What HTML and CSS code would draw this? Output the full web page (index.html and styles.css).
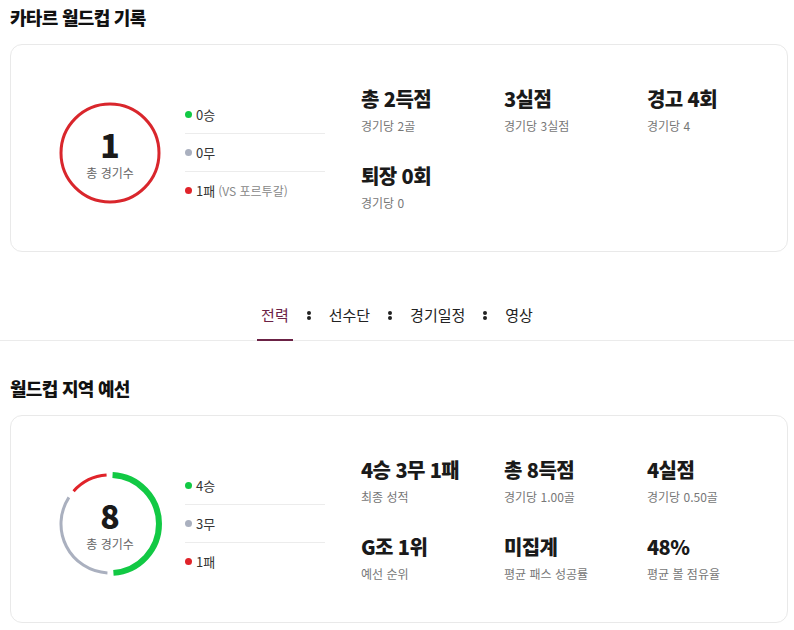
FILE: index.html
```html
<!DOCTYPE html>
<html lang="ko">
<head>
    <meta charset="UTF-8">
    <meta name="viewport" content="width=device-width, initial-scale=1.0">
    <title>카타르 월드컵 기록</title>
    <link rel="stylesheet" href="styles.css">
</head>
<body>
    <h2 class="section-title">카타르 월드컵 기록</h2>
    <div class="record-card">
        <div class="summary">
            <svg class="ring" width="106" height="106" viewBox="0 0 106 106">
                <circle cx="53" cy="53" r="49" fill="none" stroke="#d9262c" stroke-width="3"/>
            </svg>
            <strong class="summary-num">1</strong>
            <span class="summary-label">총 경기수</span>
        </div>
        <ul class="legend">
            <li><span class="dot win"></span>0승</li>
            <li><span class="dot draw"></span>0무</li>
            <li><span class="dot lose"></span>1패 <small>(VS 포르투갈)</small></li>
        </ul>
        <div class="stats">
            <div class="stat"><strong>총 2득점</strong><span>경기당 2골</span></div>
            <div class="stat"><strong>3실점</strong><span>경기당 3실점</span></div>
            <div class="stat"><strong>경고 4회</strong><span>경기당 4</span></div>
            <div class="stat"><strong>퇴장 0회</strong><span>경기당 0</span></div>
        </div>
    </div>

    <nav class="tabs">
        <a class="tab active">전력</a>
        <span class="sep"></span>
        <a class="tab">선수단</a>
        <span class="sep"></span>
        <a class="tab">경기일정</a>
        <span class="sep"></span>
        <a class="tab">영상</a>
    </nav>

    <h2 class="section-title second">월드컵 지역 예선</h2>
    <div class="record-card">
        <div class="summary">
            <svg class="ring" width="106" height="106" viewBox="0 0 106 106">
                <path d="M55.56 4.07 A49 49 0 0 1 56.42 101.88" fill="none" stroke="#12c944" stroke-width="6"/>
                <path d="M50.44 101.93 A49 49 0 0 1 11.9 26.31" fill="none" stroke="#aab0bf" stroke-width="3"/>
                <path d="M16.59 20.21 A49 49 0 0 1 49.58 4.12" fill="none" stroke="#e0232a" stroke-width="3"/>
            </svg>
            <strong class="summary-num">8</strong>
            <span class="summary-label">총 경기수</span>
        </div>
        <ul class="legend">
            <li><span class="dot win"></span>4승</li>
            <li><span class="dot draw"></span>3무</li>
            <li><span class="dot lose"></span>1패</li>
        </ul>
        <div class="stats">
            <div class="stat"><strong>4승 3무 1패</strong><span>최종 성적</span></div>
            <div class="stat"><strong>총 8득점</strong><span>경기당 1.00골</span></div>
            <div class="stat"><strong>4실점</strong><span>경기당 0.50골</span></div>
            <div class="stat"><strong>G조 1위</strong><span>예선 순위</span></div>
            <div class="stat"><strong>미집계</strong><span>평균 패스 성공률</span></div>
            <div class="stat"><strong>48%</strong><span>평균 볼 점유율</span></div>
        </div>
    </div>
</body>
</html>
```

FILE: styles.css
```css
body {
    margin: 0;
    font-family: "Noto Sans CJK KR", "Noto Sans", sans-serif;
    color: #222;
    background: #fff;
}

.section-title {
    font-size: 18px;
    line-height: 24px;
    font-weight: 900;
    letter-spacing: -0.7px;
    margin: 5px 10px 15px;
    color: #111;
}

.section-title.second {
    margin-top: 35px;
}

.record-card {
    display: flex;
    align-items: center;
    margin: 0 6px 0 10px;
    padding: 41px 0 40px 46px;
    border: 1px solid #e9e9e9;
    border-radius: 12px;
}

.summary {
    position: relative;
    width: 106px;
    height: 106px;
    margin-top: 8px;
    display: flex;
    flex-direction: column;
    align-items: center;
    justify-content: center;
    flex-shrink: 0;
}

.ring {
    position: absolute;
    top: 0;
    left: 0;
}

.summary-num {
    font-size: 32px;
    line-height: 30px;
    font-weight: 900;
    color: #1a1a1a;
    margin-top: 4px;
}

.summary-label {
    font-size: 12px;
    line-height: 16px;
    margin-top: 6px;
    color: #666;
}

.legend {
    list-style: none;
    margin: 8px 0 0 22px;
    padding: 0;
    width: 140px;
    flex-shrink: 0;
}

.legend li {
    display: flex;
    align-items: center;
    font-size: 13px;
    line-height: 19px;
    padding: 9px 0;
    color: #333;
    border-bottom: 1px solid #ececec;
}

.legend li:last-child {
    border-bottom: none;
}

.legend small {
    font-size: 12px;
    color: #888;
    margin-left: 3px;
}

.dot {
    width: 7px;
    height: 7px;
    border-radius: 50%;
    margin-right: 4px;
}

.dot.win { background: #12c944; }
.dot.draw { background: #aab0bf; }
.dot.lose { background: #e0232a; }

.stats {
    display: grid;
    grid-template-columns: repeat(3, 143px);
    row-gap: 29px;
    margin-left: 36px;
}

.stat strong {
    display: block;
    font-size: 20px;
    line-height: 26px;
    font-weight: 900;
    letter-spacing: -0.6px;
    color: #1a1a1a;
}

.stat span {
    display: block;
    margin-top: 6px;
    font-size: 12px;
    line-height: 16px;
    color: #777;
}

.tabs {
    display: flex;
    justify-content: center;
    align-items: center;
    gap: 14px;
    margin-top: 43px;
    border-bottom: 1px solid #ebebeb;
}

.tab {
    font-size: 15px;
    line-height: 20px;
    padding: 10px 4px 14px;
    margin-bottom: -1px;
    color: #222;
    border-bottom: 2px solid transparent;
}

.tab.active {
    color: #6b2245;
    border-bottom-color: #6b2245;
}

.sep {
    width: 4px;
    height: 4px;
    border-radius: 50%;
    background: #222;
    box-shadow: 0 5px 0 #222;
    margin-top: -9px;
}
```
